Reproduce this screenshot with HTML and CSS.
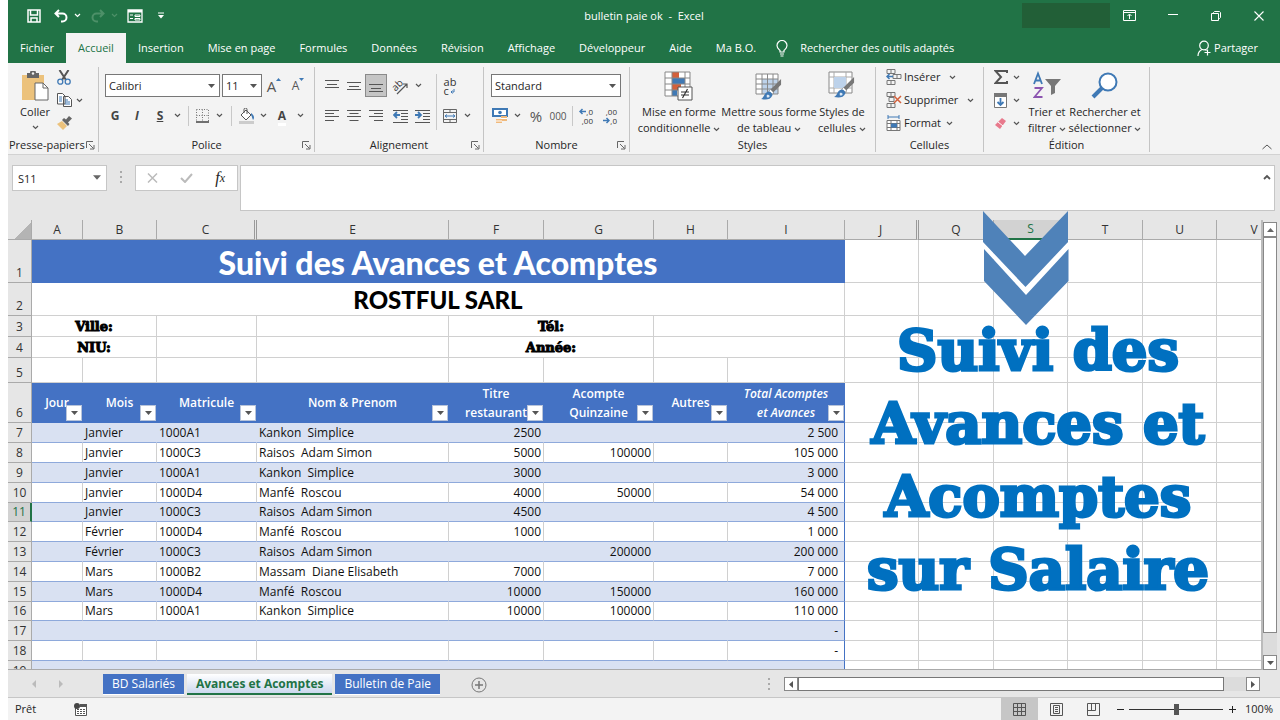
FILE: index.html
```html
<!DOCTYPE html>
<html lang="fr">
<head>
<meta charset="utf-8">
<title>bulletin paie ok - Excel</title>
<link rel="stylesheet" href="styles.css">
</head>
<body>
<svg class="defs" aria-hidden="true">
  <symbol id="chev" viewBox="0 0 7 5"><path d="M1 1l2.500 2.500L6 1" fill="none" stroke="currentColor" stroke-width="1.200"/></symbol>
  <symbol id="tri" viewBox="0 0 7 4"><path d="M0 0h7L3.500 4z" fill="currentColor"/></symbol>
  <symbol id="launch" viewBox="0 0 9 9"><path d="M.5 7V.5H7M3 3l4.500 4.500M8 4v4H4" fill="none" stroke="#666"/></symbol>
  <symbol id="brush" viewBox="0 0 22 24"><path d="M21 1v6l-8 8-3-3z" fill="#777"/><path d="M10 12l3 3-1 2-4-3z" fill="#fff" stroke="#777" stroke-width=".6"/><path d="M8 14c2 0 4 2 4 4-2 5-7 5-12 4 4-2 3-7 8-8z" fill="#3f79b5"/><path d="M6 18c1-1 3 0 3 1s-2 2-3 1z" fill="#dce9f6"/></symbol>
</svg>

<header class="titlebar">
  <div class="quick">
    <button aria-label="Enregistrer"><svg width="14" height="14" viewBox="0 0 14 14"><path d="M1 1h12v12H1zM3.500 1v5h7V1M4 13V9h6v4" fill="none" stroke="#fff" stroke-width="1.500"/></svg></button>
    <button aria-label="Annuler"><svg width="14" height="14" viewBox="0 0 14 14"><path d="M5 1L1.500 4.500 5 8M2 4.500h6.500a3.800 3.800 0 010 8H7" fill="none" stroke="#fff" stroke-width="2"/></svg></button>
    <button class="mini" aria-label="Liste des annulations"><svg width="7" height="5"><use href="#chev"/></svg></button>
    <button class="dim" aria-label="Rétablir"><svg width="14" height="14" viewBox="0 0 14 14"><path d="M9 1l3.500 3.500L9 8M12 4.500H5.500a3.800 3.800 0 000 8H7" fill="none" stroke="currentColor" stroke-width="2"/></svg></button>
    <button class="mini dim" aria-label="Liste des rétablissements"><svg width="7" height="5"><use href="#chev"/></svg></button>
    <button aria-label="Formulaire"><svg width="16" height="14" viewBox="0 0 16 14"><path d="M1 1h14v12H1z" fill="none" stroke="#fff" stroke-width="1.300"/><path d="M1 1h14v2.500H1z" fill="#fff"/><path d="M3 6h3M3 9.500h3M8 6h5v1.500H8zM8 9.500h5V11H8z" fill="none" stroke="#fff"/></svg></button>
    <button class="last" aria-label="Personnaliser"><svg width="6" height="7" viewBox="0 0 6 7"><path d="M0 1h6" stroke="#fff"/><path d="M0 3h6L3 6.500z" fill="#fff"/></svg></button>
  </div>
  <h1>bulletin paie ok&nbsp; -&nbsp; Excel</h1>
  <div class="winctl">
    <span class="account"></span>
    <button aria-label="Options du ruban"><svg width="13" height="11" viewBox="0 0 13 11"><path d="M.5.5h12v10H.5zM.5 2.500h12M6.500 9V4.500M4.500 6l2-2 2 2" fill="none" stroke="#fff"/></svg></button>
    <button aria-label="Réduire"><svg width="10" height="3" viewBox="0 0 10 3"><path d="M0 .5h10" stroke="#fff"/></svg></button>
    <button aria-label="Restaurer"><svg width="10" height="10" viewBox="0 0 10 10"><path d="M.5 2.500h7v7h-7zM2.500 2.500v-1L3.500.5h5l1 1v5l-1 1h-1" fill="none" stroke="#fff"/></svg></button>
    <button aria-label="Fermer"><svg width="10" height="10" viewBox="0 0 10 10"><path d="M.5.5l9 9M9.500.5l-9 9" stroke="#fff" stroke-width="1.100"/></svg></button>
  </div>
</header>

<nav class="tabs">
  <button>Fichier</button><button class="on">Accueil</button><button>Insertion</button><button>Mise en page</button><button>Formules</button><button>Données</button><button>Révision</button><button>Affichage</button><button>Développeur</button><button>Aide</button><button>Ma B.O.</button>
  <button class="tell"><svg width="12" height="17" viewBox="0 0 12 17"><path d="M4 12V10.500C2.500 9 1 8 1 5.500a5 5 0 0110 0c0 2.500-1.500 3.500-3 5V12zM4 14h4M4.500 16h3" fill="none" stroke="#fff" stroke-width="1.200"/></svg>Rechercher des outils adaptés</button>
  <button class="share"><svg width="14" height="17" viewBox="0 0 14 17"><circle cx="7" cy="5.500" r="4.300" fill="none" stroke="#fff" stroke-width="1.200"/><path d="M1 16c0-3 2-5.500 4-6.500M8 9.500l1.500 1M10.500 9.500v6M7.500 12.500h6" fill="none" stroke="#fff" stroke-width="1.200"/></svg>Partager</button>
</nav>

<section class="ribbon" aria-label="Ruban">
  <div class="group g-clip">
    <div class="body">
      <button class="big"><svg width="28" height="30" viewBox="0 0 28 30"><path d="M1 4h22v25H1z" fill="#ecc27c"/><path d="M6 2h3a3 3 0 016 0h3v5H6z" fill="#666"/><circle cx="12" cy="2.500" r="1.200" fill="#f3f3f3"/><path d="M14 12h8l5 5v12H14z" fill="#fff" stroke="#666"/><path d="M22 12v5h5" fill="none" stroke="#666"/></svg><span>Coller</span><svg class="c" width="7" height="5"><use href="#chev"/></svg></button>
      <div class="stack">
        <button aria-label="Couper"><svg width="14" height="15" viewBox="0 0 14 15"><path d="M2.500 0l6.500 10M11.500 0L5 10" stroke="#555" stroke-width="2"/><circle cx="3.300" cy="11.700" r="2.500" fill="none" stroke="#3f79b5" stroke-width="1.300"/><circle cx="10.700" cy="11.700" r="2.500" fill="none" stroke="#3f79b5" stroke-width="1.300"/></svg></button>
        <button aria-label="Copier"><svg width="15" height="14" viewBox="0 0 15 14"><path d="M.5.500h5l2.500 2.500v8H.5zM6.500 3.500h5l3 3v7h-8z" fill="#fff" stroke="#555"/><path d="M2 4h3M2 6h3M2 8h3M8 7h3M8 9h5M8 11h5" stroke="#3f79b5"/></svg><svg class="c" width="7" height="5"><use href="#chev"/></svg></button>
        <button aria-label="Reproduire la mise en forme"><svg width="15" height="14" viewBox="0 0 15 14"><path d="M0 8l5-3 5 5-4 4z" fill="#ecc27c"/><path d="M5 4l6 6 1.500-2-1.500-1.500 4-4L12 0 9 3.500 7 2z" fill="#666"/></svg></button>
      </div>
    </div>
    <div class="label"><span>Presse-papiers</span><svg width="9" height="9"><use href="#launch"/></svg></div>
  </div>

  <div class="group g-font">
    <div class="body rows">
      <div class="row">
        <label class="combo w115"><select aria-label="Police"><option>Calibri</option></select><svg width="7" height="4"><use href="#tri"/></svg></label>
        <label class="combo w40"><select aria-label="Taille"><option>11</option></select><svg width="7" height="4"><use href="#tri"/></svg></label>
        <button class="b24 grow" aria-label="Agrandir"><span>A</span><svg width="5" height="4" viewBox="0 0 5 4"><path d="M0 3l2.500-3L5 3z" fill="#3f79b5"/></svg></button>
        <button class="b24 shrink" aria-label="Réduire la police"><span>A</span><svg width="5" height="4" viewBox="0 0 5 4"><path d="M0 0h5L2.500 3z" fill="#3f79b5"/></svg></button>
      </div>
      <div class="row">
        <button class="b20"><b>G</b></button><button class="b24"><b class="it">I</b></button><button class="b22"><b class="un">S</b></button><button class="b12" aria-label="Plus"><svg width="7" height="5"><use href="#chev"/></svg></button><i class="sep"></i>
        <button class="b18" aria-label="Bordures"><svg width="14" height="14" viewBox="0 0 14 14"><path d="M.5.5h12v12M.5.5v12M6.500.5v12M.5 6.500h12" fill="none" stroke="#777" stroke-dasharray="1 1.500"/><path d="M0 13h13" stroke="#444" stroke-width="1.500"/></svg></button><button class="b14" aria-label="Plus"><svg width="7" height="5"><use href="#chev"/></svg></button><i class="sep"></i>
        <button class="b20" aria-label="Remplissage"><svg width="16" height="16" viewBox="0 0 16 16"><path d="M2 7l5-5 5 5-5 5z" fill="#fff" stroke="#555"/><path d="M5 5V1.500a1.500 1.500 0 013 0V6" fill="none" stroke="#555"/><path d="M12 5c3 2 4 5 2 7-1-2-1-4-2-5z" fill="#3f79b5"/><path d="M0 13h15v3H0z" fill="#ccc"/></svg></button><button class="b12" aria-label="Plus"><svg width="7" height="5"><use href="#chev"/></svg></button>
        <button class="b26" aria-label="Couleur de police"><b class="ink">A</b></button><button class="b10" aria-label="Plus"><svg width="7" height="5"><use href="#chev"/></svg></button>
      </div>
    </div>
    <div class="label"><span>Police</span><svg width="9" height="9"><use href="#launch"/></svg></div>
  </div>

  <div class="group g-align">
    <div class="body cols">
      <div class="rows">
        <div class="row">
          <button class="b22" aria-label="Haut"><svg width="14" height="14" viewBox="0 0 14 14"><path d="M0 1.500h14M2 5.500h10M0 8.500h14" stroke="#555" fill="none"/></svg></button>
          <button class="b22" aria-label="Milieu"><svg width="14" height="14" viewBox="0 0 14 14"><path d="M0 3.500h14M2 7.500h10M0 10.500h14" stroke="#555" fill="none"/></svg></button>
          <button class="b22 pressed" aria-label="Bas"><svg width="14" height="14" viewBox="0 0 14 14"><path d="M0 5.500h14M2 9.500h10M0 12.500h14" stroke="#555" fill="none"/></svg></button>
          <button class="b26" aria-label="Orientation"><svg width="18" height="18" viewBox="0 0 18 18"><text x="1" y="12" font-size="10" fill="#333" transform="rotate(-45 6 9)">ab</text><path d="M6 17L16 7M16 11V7h-4" fill="none" stroke="#555" stroke-width="1.200"/></svg></button>
          <button class="b10" aria-label="Plus"><svg width="7" height="5"><use href="#chev"/></svg></button>
        </div>
        <div class="row">
          <button class="b22" aria-label="Gauche"><svg width="14" height="13" viewBox="0 0 14 13"><path d="M0 1.500h14M0 4.500h9M0 7.500h14M0 11.500h9" stroke="#555"/></svg></button>
          <button class="b22" aria-label="Centrer"><svg width="14" height="13" viewBox="0 0 14 13"><path d="M0 1.500h14M2.500 4.500h9M0 7.500h14M2.500 11.500h9" stroke="#555"/></svg></button>
          <button class="b22" aria-label="Droite"><svg width="14" height="13" viewBox="0 0 14 13"><path d="M0 1.500h14M5 4.500h9M0 7.500h14M5 11.500h9" stroke="#555"/></svg></button>
          <button class="b26" aria-label="Diminuer le retrait"><svg width="15" height="14" viewBox="0 0 15 14"><path d="M0 1.500h15M8 4.500h7M8 7.500h7M8 10.500h7M0 13.500h15" stroke="#555"/><path d="M7 6H1M4 3L1 6l3 3" fill="none" stroke="#3f79b5" stroke-width="1.800"/></svg></button>
          <button class="b18" aria-label="Augmenter le retrait"><svg width="15" height="14" viewBox="0 0 15 14"><path d="M0 1.500h15M8 4.500h7M8 7.500h7M8 10.500h7M0 13.500h15" stroke="#555"/><path d="M0 6h6M3 3l3 3-3 3" fill="none" stroke="#3f79b5" stroke-width="1.800"/></svg></button>
        </div>
      </div>
      <i class="sep tall"></i>
      <div class="rows">
        <div class="row"><button class="b22" aria-label="Renvoyer à la ligne"><span class="wrap">ab<br>c<svg width="5" height="6" viewBox="0 0 5 6"><path d="M4 0v3H1M2.500 1.500L1 3l1.500 1.500" fill="none" stroke="#3f79b5"/></svg></span></button></div>
        <div class="row"><button class="b22" aria-label="Fusionner"><svg width="14" height="14" viewBox="0 0 14 14"><path d="M.5.5h13v13H.5zM.5 3.500h13M.5 10.500h13M7 0v3.500M7 10.500V14" fill="none" stroke="#666"/><path d="M2 7h10M4 5.500L2 7l2 1.500M10 5.500L12 7l-2 1.500" fill="none" stroke="#3f79b5"/></svg></button><button class="b12" aria-label="Plus"><svg width="7" height="5"><use href="#chev"/></svg></button></div>
      </div>
    </div>
    <div class="label"><span>Alignement</span><svg width="9" height="9"><use href="#launch"/></svg></div>
  </div>

  <div class="group g-num">
    <div class="body rows">
      <div class="row"><label class="combo w130"><select aria-label="Format de nombre"><option>Standard</option></select><svg width="7" height="4"><use href="#tri"/></svg></label></div>
      <div class="row">
        <button class="b20" aria-label="Comptabilité"><svg width="16" height="16" viewBox="0 0 16 16"><path d="M1 1h14v7H1z" fill="#fff" stroke="#3f79b5" stroke-width="2"/><circle cx="8" cy="4.500" r="1.800" fill="#3f79b5"/><path d="M9 8h6v5H9zM4 11h6v4H4z" fill="#f0b97c"/><path d="M4 13h6M9 10.500h6" stroke="#fff"/></svg></button>
        <button class="b14" aria-label="Plus"><svg width="7" height="5"><use href="#chev"/></svg></button>
        <button class="b24 pct">%</button><button class="b20 mil">000</button><i class="sep s-num"></i>
        <button class="b22 dec" aria-label="Ajouter une décimale"><span><svg width="7" height="7" viewBox="0 0 7 7"><path d="M7 3.500H1M3.500 1L1 3.500 3.500 6" fill="none" stroke="#3f79b5" stroke-width="1.500"/></svg>,0</span><span>,00</span></button>
        <button class="b24 dec" aria-label="Réduire les décimales"><span>,00</span><span><svg width="7" height="7" viewBox="0 0 7 7"><path d="M0 3.500h6M3.500 1L6 3.500 3.500 6" fill="none" stroke="#3f79b5" stroke-width="1.500"/></svg>,0</span></button>
      </div>
    </div>
    <div class="label"><span>Nombre</span><svg width="9" height="9"><use href="#launch"/></svg></div>
  </div>

  <div class="group g-styles">
    <div class="body">
      <button class="big w88"><svg width="30" height="30" viewBox="0 0 30 30"><path d="M1 1h25v24H1z" fill="#fff"/><path d="M8 1h7v6H8z" fill="#d3603b"/><path d="M8 7h13v6H8z" fill="#3f79b5"/><path d="M8 13h9v6H8z" fill="#d3603b"/><path d="M8 19h5v6H8z" fill="#3f79b5"/><path d="M1 1h25v24H1zM1 7h25M1 13h25M1 19h25M8 1v24M21 1v24" fill="none" stroke="#888"/><path d="M14 16h14v13H14z" fill="#fff" stroke="#555"/><path d="M17 21h8M17 24h8M23.500 18l-5 9" stroke="#333" stroke-width="1.200"/></svg><span>Mise en forme<br>conditionnelle <svg width="7" height="5"><use href="#chev"/></svg></span></button>
      <button class="big w92"><svg width="28" height="30" viewBox="0 0 28 30"><path d="M1 3h22v20H1z" fill="#fff"/><path d="M7 8h16v15H7z" fill="#bdd2ea"/><path d="M1 3h22v20H1zM1 8h22M1 13h22M1 18h22M7 3v20M12.500 3v20M18 3v20" fill="none" stroke="#888"/><use href="#brush" x="6" y="7" width="21" height="23"/></svg><span>Mettre sous forme<br>de tableau <svg width="7" height="5"><use href="#chev"/></svg></span></button>
      <button class="big w54"><svg width="28" height="30" viewBox="0 0 28 30"><path d="M1 1h23v21H1z" fill="#fff" stroke="#888"/><path d="M1 6h23M1 17h23M6 1v21M18 1v21" stroke="#aaa"/><path d="M6 6h12v11H6z" fill="#bdd2ea"/><use href="#brush" x="6" y="5" width="21" height="23"/></svg><span>Styles de<br>cellules <svg width="7" height="5"><use href="#chev"/></svg></span></button>
    </div>
    <div class="label"><span>Styles</span></div>
  </div>

  <div class="group g-cells">
    <div class="body stack">
      <button><svg width="16" height="16" viewBox="0 0 16 16"><path d="M1 .5h8v4H1zM1 11.500h8v4H1zM5 .5v4M5 11.500v4M7 5.500h8v4H7zM11 5.500v4" fill="none" stroke="#777"/><path d="M7 7.500H1M3.500 5L1 7.500 3.500 10" fill="none" stroke="#3f79b5" stroke-width="1.500"/></svg><span>Insérer</span><svg class="c far" width="7" height="5"><use href="#chev"/></svg></button>
      <button><svg width="16" height="16" viewBox="0 0 16 16"><path d="M1 .5h8v4H1zM1 11.500h8v4H1zM5 .5v4M5 11.500v4M3 5.500h5v4H3z" fill="none" stroke="#777"/><path d="M8 4l7 7M15 4l-7 7" stroke="#d3603b" stroke-width="1.500"/></svg><span>Supprimer</span><svg class="c far" width="7" height="5"><use href="#chev"/></svg></button>
      <button><svg width="16" height="16" viewBox="0 0 16 16"><path d="M2 2h11M2 0v4M13 0v4" stroke="#3f79b5"/><path d="M1 5.500h13v10H1zM1 8.500h13M1 12.500h13M5 5.500v10M11 5.500v10" fill="#fff" stroke="#777"/><path d="M5 8.500h6v4H5z" fill="#3f79b5"/></svg><span>Format</span><svg class="c" width="7" height="5"><use href="#chev"/></svg></button>
    </div>
    <div class="label"><span>Cellules</span></div>
  </div>

  <div class="group g-edit">
    <div class="body">
      <div class="stack">
        <button aria-label="Somme"><svg width="14" height="14" viewBox="0 0 14 14"><path d="M13 3V1H1.500L7 7l-5.500 6H13v-2" fill="none" stroke="#555" stroke-width="2"/></svg><svg class="c" width="7" height="5"><use href="#chev"/></svg></button>
        <button aria-label="Remplir"><svg width="14" height="15" viewBox="0 0 14 15"><path d="M.5.500h12v14H.5z" fill="#fff" stroke="#777"/><path d="M0 0h13v4H0z" fill="#777"/><path d="M6.500 5v7M3.500 9l3 3 3-3" fill="none" stroke="#3f79b5" stroke-width="1.800"/></svg><svg class="c" width="7" height="5"><use href="#chev"/></svg></button>
        <button aria-label="Effacer"><svg width="14" height="13" viewBox="0 0 14 13"><path d="M8 1l4 3-6 8-5-4z" fill="#e8798c"/><path d="M4 5l5 4" stroke="#fff"/></svg><svg class="c" width="7" height="5"><use href="#chev"/></svg></button>
      </div>
      <button class="big w38"><svg width="28" height="30" viewBox="0 0 28 30"><path d="M1 13L5 2.500 9 13M2.500 9.500h5" fill="none" stroke="#3f79b5" stroke-width="1.800"/><path d="M1.500 17H9L1.500 26H9.500" fill="none" stroke="#8c55b0" stroke-width="1.800"/><path d="M12 8h16l-6 7v7l-4 2v-9z" fill="#777"/></svg><span>Trier et<br>filtrer <svg width="7" height="5"><use href="#chev"/></svg></span></button>
      <button class="big w78"><svg width="28" height="30" viewBox="0 0 28 30"><circle cx="17" cy="11" r="8.500" fill="#fff" stroke="#3f79b5" stroke-width="2"/><path d="M11 17L2 26" stroke="#3f79b5" stroke-width="4"/></svg><span>Rechercher et<br>sélectionner <svg width="7" height="5"><use href="#chev"/></svg></span></button>
    </div>
    <div class="label"><span>Édition</span></div>
  </div>
  <button class="fold" aria-label="Réduire le ruban"><svg width="10" height="6" viewBox="0 0 10 6"><path d="M.5 5L5 1l4.500 4" fill="none" stroke="#555"/></svg></button>
</section>

<section class="formula">
  <label class="namebox"><input aria-label="Zone Nom" value="S11"><svg width="8" height="5"><use href="#tri"/></svg></label>
  <span class="dots"></span>
  <div class="fx">
    <button aria-label="Annuler la saisie"><svg width="11" height="10" viewBox="0 0 11 10"><path d="M1 .5l9 9M10 .5l-9 9" stroke="#bbb" stroke-width="1.500"/></svg></button>
    <button aria-label="Valider"><svg width="13" height="10" viewBox="0 0 13 10"><path d="M1 5l4 4 7-8" fill="none" stroke="#bbb" stroke-width="2"/></svg></button>
    <button class="fn">f<small>x</small></button>
  </div>
  <div class="entry"><textarea aria-label="Barre de formule"></textarea><button aria-label="Réduire la barre"><svg width="8" height="6" viewBox="0 0 8 6"><path d="M1 5l3-3 3 3" fill="none" stroke="#555" stroke-width="1.800"/></svg></button></div>
</section>

<main class="work">
  <div class="viewport">
    <table class="sheet">
      <colgroup><col class="k24"><col class="k51"><col class="k74"><col class="k100"><col class="k192"><col class="k95"><col class="k110"><col class="k74"><col class="k117"><col class="k74"><col class="k75"><col class="k74"><col class="k75"><col class="k74"><col class="k75"></colgroup>
      <thead><tr><th class="corner"></th><th>A</th><th>B</th><th class="hid">C</th><th>E</th><th>F</th><th>G</th><th>H</th><th>I</th><th class="hid">J</th><th>Q</th><th class="cur">S</th><th>T</th><th>U</th><th>V</th></tr></thead>
      <tbody class="top">
        <tr class="r1"><th>1</th><td colspan="8" class="banner">Suivi des Avances et Acomptes</td><td></td><td></td><td></td><td></td><td></td><td></td></tr>
        <tr class="r2"><th>2</th><td colspan="8" class="company">ROSTFUL SARL</td><td></td><td></td><td></td><td></td><td></td><td></td></tr>
        <tr class="r3"><th>3</th><td colspan="2" class="field">Ville:</td><td></td><td></td><td colspan="2" class="field">Tél:</td><td colspan="2"></td><td></td><td></td><td></td><td></td><td></td><td></td></tr>
        <tr class="r3"><th>4</th><td colspan="2" class="field">NIU:</td><td></td><td></td><td colspan="2" class="field">Année:</td><td colspan="2"></td><td></td><td></td><td></td><td></td><td></td><td></td></tr>
        <tr class="r5"><th>5</th><td></td><td></td><td></td><td></td><td></td><td></td><td></td><td></td><td></td><td></td><td></td><td></td><td></td><td></td></tr>
        <tr class="r6"><th>6</th>
          <td class="h">Jour<button aria-label="Filtrer Jour"><svg width="7" height="4"><use href="#tri"/></svg></button></td>
          <td class="h">Mois<button aria-label="Filtrer Mois"><svg width="7" height="4"><use href="#tri"/></svg></button></td>
          <td class="h">Matricule<button aria-label="Filtrer Matricule"><svg width="7" height="4"><use href="#tri"/></svg></button></td>
          <td class="h">Nom &amp; Prenom<button aria-label="Filtrer Nom"><svg width="7" height="4"><use href="#tri"/></svg></button></td>
          <td class="h">Titre<br>restaurant<button aria-label="Filtrer Titre"><svg width="7" height="4"><use href="#tri"/></svg></button></td>
          <td class="h">Acompte<br>Quinzaine<button aria-label="Filtrer Acompte"><svg width="7" height="4"><use href="#tri"/></svg></button></td>
          <td class="h">Autres<button aria-label="Filtrer Autres"><svg width="7" height="4"><use href="#tri"/></svg></button></td>
          <td class="h it">Total Acomptes<br>et Avances<button aria-label="Filtrer Total"><svg width="7" height="4"><use href="#tri"/></svg></button></td>
          <td></td><td></td><td></td><td></td><td></td><td></td></tr>
      </tbody>
      <tbody class="data">
        <tr><th>7</th><td></td><td>Janvier</td><td>1000A1</td><td>Kankon&nbsp; Simplice</td><td>2500</td><td></td><td></td><td>2 500</td><td></td><td></td><td></td><td></td><td></td><td></td></tr>
        <tr><th>8</th><td></td><td>Janvier</td><td>1000C3</td><td>Raisos&nbsp; Adam Simon</td><td>5000</td><td>100000</td><td></td><td>105 000</td><td></td><td></td><td></td><td></td><td></td><td></td></tr>
        <tr><th>9</th><td></td><td>Janvier</td><td>1000A1</td><td>Kankon&nbsp; Simplice</td><td>3000</td><td></td><td></td><td>3 000</td><td></td><td></td><td></td><td></td><td></td><td></td></tr>
        <tr><th>10</th><td></td><td>Janvier</td><td>1000D4</td><td>Manfé&nbsp; Roscou</td><td>4000</td><td>50000</td><td></td><td>54 000</td><td></td><td></td><td></td><td></td><td></td><td></td></tr>
        <tr><th class="cur">11</th><td></td><td>Janvier</td><td>1000C3</td><td>Raisos&nbsp; Adam Simon</td><td>4500</td><td></td><td></td><td>4 500</td><td></td><td></td><td></td><td></td><td></td><td></td></tr>
        <tr><th>12</th><td></td><td>Février</td><td>1000D4</td><td>Manfé&nbsp; Roscou</td><td>1000</td><td></td><td></td><td>1 000</td><td></td><td></td><td></td><td></td><td></td><td></td></tr>
        <tr><th>13</th><td></td><td>Février</td><td>1000C3</td><td>Raisos&nbsp; Adam Simon</td><td></td><td>200000</td><td></td><td>200 000</td><td></td><td></td><td></td><td></td><td></td><td></td></tr>
        <tr><th>14</th><td></td><td>Mars</td><td>1000B2</td><td>Massam&nbsp; Diane Elisabeth</td><td>7000</td><td></td><td></td><td>7 000</td><td></td><td></td><td></td><td></td><td></td><td></td></tr>
        <tr><th>15</th><td></td><td>Mars</td><td>1000D4</td><td>Manfé&nbsp; Roscou</td><td>10000</td><td>150000</td><td></td><td>160 000</td><td></td><td></td><td></td><td></td><td></td><td></td></tr>
        <tr><th>16</th><td></td><td>Mars</td><td>1000A1</td><td>Kankon&nbsp; Simplice</td><td>10000</td><td>100000</td><td></td><td>110 000</td><td></td><td></td><td></td><td></td><td></td><td></td></tr>
        <tr><th>17</th><td></td><td></td><td></td><td></td><td></td><td></td><td></td><td>-</td><td></td><td></td><td></td><td></td><td></td><td></td></tr>
        <tr><th>18</th><td></td><td></td><td></td><td></td><td></td><td></td><td></td><td>-</td><td></td><td></td><td></td><td></td><td></td><td></td></tr>
        <tr><th>19</th><td></td><td></td><td></td><td></td><td></td><td></td><td></td><td></td><td></td><td></td><td></td><td></td><td></td><td></td></tr>
      </tbody>
    </table>
  </div>
  <div class="vscroll">
    <button aria-label="Défiler vers le haut"><svg width="7" height="4" viewBox="0 0 7 4"><path d="M0 4h7L3.500 0z" fill="#666"/></svg></button>
    <span class="thumb"></span><span class="track"></span>
    <button aria-label="Défiler vers le bas"><svg width="7" height="4"><use href="#tri"/></svg></button>
  </div>
  <div class="callout">
    <svg width="88" height="115" viewBox="0 0 88 115"><path d="M1 31l42.500 45L86 31l1 7-43 46L2 38z" fill="#fff"/><path d="M1 0l42 45L86 0v31L43.500 76 1 31zM2 38l42 46 42.500-46v32L44 114 2 70z" fill="#4f82b9"/></svg>
    <p>Suivi des<br>Avances et<br>Acomptes<br>sur Salaire</p>
  </div>
</main>

<nav class="sheettabs">
  <div class="arrows"><svg width="5" height="8" viewBox="0 0 5 8"><path d="M4 0v8L0 4z" fill="#bbb"/></svg><svg width="5" height="8" viewBox="0 0 5 8"><path d="M0 0v8l4-4z" fill="#bbb"/></svg></div>
  <button>BD Salariés</button><button class="on">Avances et Acomptes</button><button>Bulletin de Paie</button>
  <button class="add" aria-label="Nouvelle feuille"><svg width="16" height="16" viewBox="0 0 16 16"><circle cx="8" cy="8" r="7" fill="none" stroke="#777"/><path d="M8 4v8M4 8h8" stroke="#777" stroke-width="1.500"/></svg></button>
  <span class="dots"></span>
  <div class="hscroll">
    <button aria-label="Défiler à gauche"><svg width="4" height="7" viewBox="0 0 4 7"><path d="M4 0v7L0 3.500z" fill="#555"/></svg></button>
    <span class="thumb"></span><span class="track"></span>
    <button aria-label="Défiler à droite"><svg width="4" height="7" viewBox="0 0 4 7"><path d="M0 0v7l4-3.500z" fill="#555"/></svg></button>
  </div>
</nav>

<footer class="status">
  <span>Prêt</span>
  <svg class="macro" width="13" height="13" viewBox="0 0 13 13"><path d="M1.500 4v8.500h11v-11H6" fill="#fff" stroke="#555"/><path d="M6 1h7v3H6z" fill="#555"/><circle cx="3" cy="3" r="3" fill="#444"/><path d="M3 6.500h8M3 8.500h8M3 10.500h8" stroke="#555" stroke-dasharray="2 1"/></svg>
  <div class="views">
    <button class="on" aria-label="Normal"><svg width="13" height="13" viewBox="0 0 13 13"><path d="M.5.5h12v12H.5zM.5 4.500h12M.5 8.500h12M4.500.5v12M8.500.5v12" fill="none" stroke="#555"/></svg></button>
    <button aria-label="Mise en page"><svg width="13" height="13" viewBox="0 0 13 13"><path d="M.5.5h12v12H.5zM3.500 2.500h6v8h-6zM5 4.500h3M5 6.500h3M5 8.500h3" fill="none" stroke="#555"/></svg></button>
    <button aria-label="Sauts de page"><svg width="13" height="13" viewBox="0 0 13 13"><path d="M.5.5h12v12H.5zM4.500.5v7M8.500.5v7h-8" fill="none" stroke="#555"/></svg></button>
  </div>
  <button class="z" aria-label="Zoom arrière"><svg width="7" height="7" viewBox="0 0 7 7"><path d="M0 3.500h7" stroke="#222"/></svg></button>
  <input type="range" aria-label="Zoom" min="0" max="100" value="50">
  <button class="z" aria-label="Zoom avant"><svg width="7" height="7" viewBox="0 0 7 7"><path d="M0 3.500h7M3.500 0v7" stroke="#222"/></svg></button>
  <span class="pc">100%</span>
</footer>
</body>
</html>
```

FILE: styles.css
```css
* { box-sizing: border-box; }
body {
  margin: 0;
  padding-left: 8px;
  min-height: 100vh;
  display: flex;
  flex-direction: column;
  background: #fff;
  color: #262626;
  font: 11px/16px "Open Sans", "Noto Sans", sans-serif;
}
button, select, input, textarea { font: inherit; color: inherit; border: 0; background: none; padding: 0; margin: 0; border-radius: 0; outline: 0; }
button { display: flex; align-items: center; justify-content: center; white-space: nowrap; }
svg { display: block; flex: none; }
.defs { position: absolute; width: 0; height: 0; }
.it { font-style: italic; }
.un { text-decoration: underline; }

/* Title bar and tabs */
.titlebar { display: grid; grid-template-columns: 1fr auto 1fr; align-items: center; height: 33px; padding-bottom: 2px; background: #217346; color: #fff; }
.titlebar h1 { margin: 0; font-size: 11px; font-weight: 400; }
.quick { display: flex; align-items: center; padding-left: 15px; }
.quick button { width: 22px; height: 24px; }
.quick button + button { margin-left: 5px; }
.quick button.mini { width: 10px; margin-left: 0; }
.quick .dim { color: #4d9068; }
.quick button.last { width: 20px; }
.winctl { display: flex; align-items: center; justify-content: flex-end; }
.winctl button { width: 43px; height: 30px; }
.account { width: 88px; height: 25px; margin-right: -2px; background: #225f37; }
.tabs { display: flex; height: 30px; padding-right: 10px; background: #217346; color: #fff; }
.tabs button { padding: 0 12px; }
.tabs .on { background: #f3f3f3; color: #217346; }
.tabs .tell { padding-left: 8px; gap: 12px; }
.tabs .share { margin-left: auto; gap: 3px; }

/* Ribbon */
.ribbon { display: flex; height: 92px; padding-top: 4px; background: #f3f3f3; border-bottom: 1px solid #d2d2d2; }
.group { display: flex; flex-direction: column; margin-bottom: 2px; border-right: 1px solid #c4c4c4; }
.body { display: flex; height: 72px; }
.label { position: relative; display: flex; justify-content: center; margin-top: 2px; height: 14px; line-height: 14px; }
.label svg { position: absolute; right: 3px; top: 3px; }
.g-clip { width: 91px; } .g-font { width: 216px; } .g-align { width: 169px; } .g-num { width: 146px; }
.g-styles { width: 246px; } .g-cells { width: 108px; } .g-edit { width: 166px; }
.g-clip .label { justify-content: flex-start; padding-left: 1px; }
.body.rows { flex-direction: column; gap: 7px; padding: 7px 0 0 6px; }
.body.cols { padding: 7px 0 0 6px; }
.cols .rows { display: flex; flex-direction: column; gap: 7px; }
.row { display: flex; align-items: center; height: 23px; }
.combo { position: relative; height: 23px; border: 1px solid #777; background: #fff; }
.combo select { appearance: none; width: 100%; height: 21px; padding-left: 3px; }
.combo svg { position: absolute; right: 4px; top: 9px; color: #555; pointer-events: none; }
.w115 { width: 115px; } .w40 { width: 40px; margin-left: 2px; } .w130 { width: 130px; margin-left: 1px; }
.row button, .stack svg.c, .big svg { color: #555; }
.row button { height: 23px; }
.b10 { width: 10px; } .b12 { width: 12px; } .b14 { width: 14px; } .b18 { width: 18px; } .b20 { width: 20px; } .b22 { width: 22px; } .b24 { width: 24px; } .b26 { width: 26px; }
.row b { font-size: 12px; color: #444; }
.row .ink { border-bottom: 3px solid #fff; line-height: 15px; margin-top: 3px; }
.grow { font-size: 15px; } .shrink { font-size: 12px; }
.grow svg, .shrink svg { align-self: flex-start; margin-top: 4px; }
.pct { font-size: 15px; } .mil { font-size: 10px; }
.wrap { font-size: 11px; line-height: 9px; text-align: left; color: #333; }
.wrap svg { display: inline-block; margin-left: 1px; }
.row .dec { flex-direction: column; align-items: flex-end; padding-right: 4px; font-size: 8px; line-height: 9px; color: #333; }
.dec svg { display: inline-block; }
.sep { width: 1px; height: 20px; margin: 0 5px; background: #c8c8c8; }
.sep.tall { height: 56px; margin: 0 2px 0 5px; }
.sep.s-num { margin: 0 2px 0 4px; }
.pressed { background: #c5c5c5; border: 1px solid #8a8a8a; }
.big { flex-direction: column; justify-content: flex-start; padding-top: 4px; }
.big > svg { margin-bottom: 3px; }
.big svg.c { margin: 5px 0 0; }
.big span svg { display: inline-block; vertical-align: middle; }
.g-clip .big { width: 34px; margin-left: 10px; }
.w88 { width: 88px; } .w92 { width: 92px; } .w54 { width: 54px; } .w38 { width: 38px; } .w78 { width: 78px; }
.g-styles .body { padding-left: 5px; }
.stack { display: flex; flex-direction: column; }
.stack button { height: 23px; justify-content: flex-start; gap: 2px; padding-bottom: 3px; }
.g-clip .stack { padding-left: 5px; }
.g-clip .stack button { gap: 1px; }
.g-cells .stack { padding-left: 10px; }
.stack .c { margin-left: 3px; }
.stack .c.far { margin-left: 7px; }
.g-edit .stack { padding-left: 10px; width: 44px; }
.fold { margin-left: auto; width: 26px; height: 14px; align-self: flex-end; }

/* Formula bar */
.formula { display: flex; align-items: flex-start; min-height: 65px; padding: 10px 5px 9px 4px; background: #e6e6e6; }
.namebox { position: relative; width: 95px; height: 26px; border: 1px solid #c6c6c6; background: #fff; }
.namebox input { width: 70px; height: 24px; padding-left: 5px; }
.namebox svg { position: absolute; right: 5px; top: 9px; color: #666; }
.dots { width: 2px; height: 14px; margin: 6px 13px; background: repeating-linear-gradient(#aaa 0 2px, transparent 2px 5px); }
.fx { display: flex; width: 103px; height: 26px; border: 1px solid #c6c6c6; background: #fff; }
.fx button { flex: 1; }
.fn { font: italic 16px/20px "Liberation Serif", serif; }
.fn small { font-size: 12px; }
.entry { display: flex; align-items: flex-start; flex: 1; height: 46px; margin-left: 2px; border: 1px solid #c6c6c6; background: #fff; }
.entry textarea { flex: 1; height: 44px; resize: none; }
.entry button { width: 14px; height: 22px; }

/* Worksheet */
.work { position: relative; display: flex; flex: 1 0 450px; height: 450px; background: #e6e6e6; }
.viewport { flex: 1; overflow: hidden; background: #fff; border-right: 2px solid #bbb; border-bottom: 1px solid #aaa; }
.sheet { table-layout: fixed; width: 1284px; border-collapse: separate; border-spacing: 0; font-size: 12px; line-height: 18px; color: #111; }
.k24 { width: 24px; } .k51 { width: 51px; } .k74 { width: 74px; } .k75 { width: 75px; } .k95 { width: 95px; } .k100 { width: 100px; } .k110 { width: 110px; } .k117 { width: 117px; } .k192 { width: 192px; }
.sheet th, .sheet td { padding: 0 2px; overflow: hidden; white-space: nowrap; border-right: 1px solid #d0d0d0; border-bottom: 1px solid #d0d0d0; }
.sheet th { padding: 0; background: #e6e6e6; font-weight: 400; color: #333; border-color: #aaa; vertical-align: bottom; }
.sheet thead th { height: 20px; }
.sheet th.hid { border-right: 3px double #999; }
.sheet th.cur { background: #d2d2d2; color: #217346; }
.sheet thead .cur { border-bottom: 2px solid #217346; }
.sheet tbody .cur { border-right: 2px solid #217346; }
.sheet .corner { background: linear-gradient(135deg, #e6e6e6 60%, #b4b4b4 60%); }
.r1 { height: 43px; } .r2 { height: 33px; } .r3 { height: 21px; } .r5 { height: 25px; } .r6 { height: 40px; }
.sheet .banner { padding-top: 3px; background: #4472c4; color: #fff; border-color: #4472c4; text-align: center; font: 900 32px/38px Lato, sans-serif; }
.sheet .company { padding-top: 2px; text-align: center; font: 900 24px/30px Lato, sans-serif; color: #000; }
.sheet .field { padding-top: 1px; text-align: center; font: 700 13px/18px "DejaVu Serif", serif; color: #000; -webkit-text-stroke: 1px #000; }
.sheet .h { position: relative; overflow: visible; background: #4472c4; color: #fff; border-color: #4472c4; text-align: center; font-weight: 600; line-height: 19px; }
.h button { position: absolute; right: 0; bottom: 1px; width: 16px; height: 16px; background: #fff; border: 1px solid #b8c4da; color: #555; }
.data tr { height: 20px; }
.data tr:nth-child(5n) { height: 19px; }
.data td:nth-child(n+6):nth-child(-n+9) { text-align: right; }
.data td:nth-child(9) { padding-right: 6px; border-right-color: #4472c4; }
.data td:nth-child(-n+9) { border-bottom-color: #8ea9db; }
.data tr:nth-child(odd) td:nth-child(-n+8) { border-right-color: #d9e1f2; }
.data tr:nth-child(odd) td:nth-child(-n+9) { background: #d9e1f2; }
.vscroll { display: flex; flex-direction: column; width: 17px; padding: 2px 3px 0 0; }
.vscroll button { width: 14px; height: 15px; border: 1px solid #888; background: #fff; color: #555; }
.vscroll .thumb { flex: 1; width: 14px; border: 1px solid #888; background: #fff; }
.vscroll .track { width: 14px; height: 22px; background: #dcdcdc; }
.callout { position: absolute; left: 850px; top: -9px; width: 360px; color: #0070c0; text-align: center; pointer-events: none; }
.callout svg { margin-left: 124px; }
.callout p { margin: -12px 0 0; font: 700 56px/73px "DejaVu Serif", serif; -webkit-text-stroke: 3px #0070c0; white-space: nowrap; }

/* Sheet tabs */
.sheettabs { display: flex; align-items: flex-start; height: 28px; padding: 4px 20px 0 0; background: #e6e6e6; border-bottom: 1px solid #c6c6c6; font-size: 12px; }
.arrows { display: flex; gap: 22px; width: 95px; padding: 6px 0 0 24px; }
.sheettabs > button { height: 21px; padding: 0 9px; margin-right: 3px; background: #4472c4; color: #fff; border-bottom: 1px solid #fff; }
.sheettabs > button.on { background: linear-gradient(#fff, #ccd8ee); color: #217346; font-weight: 700; border-bottom: 2px solid #217346; }
.sheettabs > button.add { background: none; padding: 0; border: 0; margin-left: 28px; }
.sheettabs > .dots { margin: 4px 14px 0 auto; }
.hscroll { display: flex; width: 38%; min-width: 200px; height: 14px; margin-top: 3px; }
.hscroll button { width: 14px; border: 1px solid #888; background: #fff; }
.hscroll .thumb { flex: 1; border: 1px solid #777; background: #fff; }
.hscroll .track { width: 22px; background: #dcdcdc; }

/* Status bar */
.status { display: flex; align-items: center; height: 22px; padding: 0 7px; background: #f3f3f3; }
.macro { margin-left: 38px; }
.views { display: flex; margin-left: auto; align-self: stretch; }
.views button { width: 37px; }
.views .on { background: #c6c6c6; }
.z { width: 16px; height: 20px; }
.status input { appearance: none; width: 94px; height: 12px; margin: 0 1px; background: linear-gradient(#333, #333) center / 100% 1px no-repeat; }
.status input::-webkit-slider-thumb { appearance: none; width: 5px; height: 11px; background: #555; }
.pc { margin-left: 5px; }
```
